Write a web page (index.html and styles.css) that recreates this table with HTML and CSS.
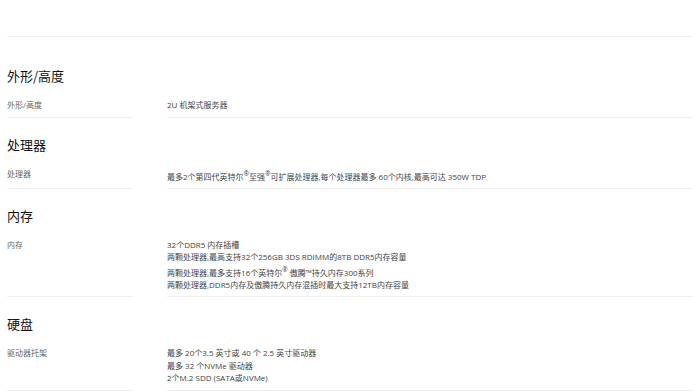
FILE: index.html
```html
<!DOCTYPE html>
<html lang="zh-CN">
<head>
<meta charset="utf-8">
<title>技术规格</title>
<link rel="stylesheet" href="styles.css">
</head>
<body>
<div class="topbar"></div>
<section class="spec">
  <h2 class="spec-title">外形/高度</h2>
  <div class="spec-row">
    <div class="spec-label">外形/高度</div>
    <div class="spec-value"><p>2U 机架式服务器</p></div>
  </div>
</section>
<section class="spec">
  <h2 class="spec-title">处理器</h2>
  <div class="spec-row">
    <div class="spec-label">处理器</div>
    <div class="spec-value"><p>最多2个第四代英特尔<sup>®</sup>至强<sup>®</sup>可扩展处理器,每个处理器最多 60个内核,最高可达 350W TDP</p></div>
  </div>
</section>
<section class="spec">
  <h2 class="spec-title">内存</h2>
  <div class="spec-row">
    <div class="spec-label">内存</div>
    <div class="spec-value">
      <p>32个DDR5 内存插槽</p>
      <p>两颗处理器,最高支持32个256GB 3DS RDIMM的8TB DDR5内存容量</p>
      <p>两颗处理器,最多支持16个英特尔<sup>®</sup> 傲腾™持久内存300系列</p>
      <p>两颗处理器,DDR5内存及傲腾持久内存混插时最大支持12TB内存容量</p>
    </div>
  </div>
</section>
<section class="spec">
  <h2 class="spec-title">硬盘</h2>
  <div class="spec-row">
    <div class="spec-label">驱动器托架</div>
    <div class="spec-value">
      <p>最多 20个3.5 英寸或 40 个 2.5 英寸驱动器</p>
      <p>最多 32 个NVMe 驱动器</p>
      <p>2个M.2 SDD (SATA或NVMe)</p>
    </div>
  </div>
</section>
</body>
</html>
```
FILE: styles.css
```css
html, body {
  margin: 0;
  padding: 0;
  background: #ffffff;
}
body {
  padding: 0 7px 0 7px;
  font-family: "Noto Sans CJK SC", "Noto Sans", sans-serif;
  color: #333333;
}
.topbar {
  height: 36px;
  border-bottom: 1px solid #eeeeee;
}
.spec {
  padding-top: 17px;
}
.spec:first-of-type {
  padding-top: 29px;
}
.spec-title {
  margin: 0;
  font-size: 13px;
  line-height: 20px;
  font-weight: 400;
  color: #111111;
}
.spec-row {
  display: grid;
  grid-template-columns: 126px 1fr;
  column-gap: 34px;
  padding-top: 13px;
}
.spec-label,
.spec-value {
  font-family: "Open Sans", "Noto Sans CJK SC", sans-serif;
  font-size: 8px;
  line-height: 12.5px;
  padding-bottom: 5px;
  border-bottom: 1px solid #eeeeee;
}
.spec-label {
  color: #666666;
}
.spec-value {
  color: #444444;
}
.spec-value p {
  margin: 0;
}
sup {
  font-size: 6.5px;
  vertical-align: super;
}
```
